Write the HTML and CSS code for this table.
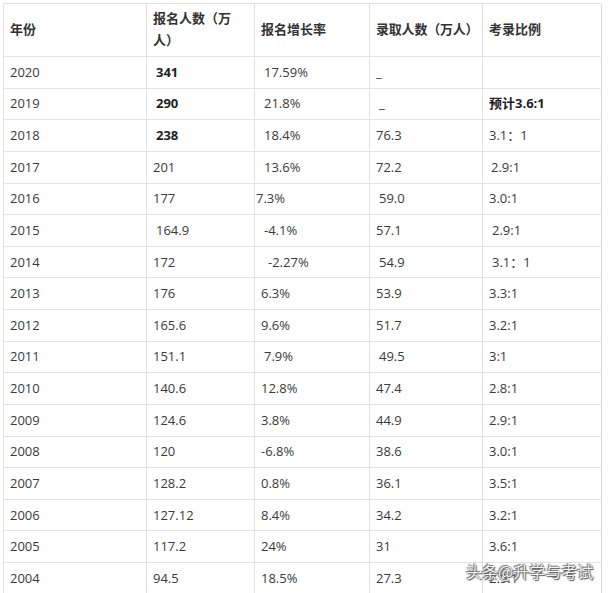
FILE: index.html
```html
<!DOCTYPE html>
<html lang="zh-CN">
<head>
<meta charset="utf-8">
<title>历年考研报名人数</title>
<link rel="stylesheet" href="styles.css">
</head>
<body>
<div class="page">
  <div class="table">
    <div class="cell head">年份</div>
    <div class="cell head">报名人数（万人）</div>
    <div class="cell head">报名增长率</div>
    <div class="cell head one-line">录取人数（万人）</div>
    <div class="cell head">考录比例</div>

    <div class="cell">2020</div>
    <div class="cell b ind">341</div>
    <div class="cell ind">17.59%</div>
    <div class="cell low">_</div>
    <div class="cell"></div>

    <div class="cell">2019</div>
    <div class="cell b ind">290</div>
    <div class="cell ind">21.8%</div>
    <div class="cell low ind">_</div>
    <div class="cell b cn">预计3.6:1</div>

    <div class="cell">2018</div>
    <div class="cell b ind">238</div>
    <div class="cell ind">18.4%</div>
    <div class="cell">76.3</div>
    <div class="cell">3.1：1</div>

    <div class="cell">2017</div>
    <div class="cell">201</div>
    <div class="cell ind">13.6%</div>
    <div class="cell">72.2</div>
    <div class="cell ind-s">2.9:1</div>

    <div class="cell">2016</div>
    <div class="cell">177</div>
    <div class="cell tight">7.3%</div>
    <div class="cell ind">59.0</div>
    <div class="cell">3.0:1</div>

    <div class="cell">2015</div>
    <div class="cell ind">164.9</div>
    <div class="cell ind">-4.1%</div>
    <div class="cell">57.1</div>
    <div class="cell ind">2.9:1</div>

    <div class="cell">2014</div>
    <div class="cell">172</div>
    <div class="cell wide">-2.27%</div>
    <div class="cell ind">54.9</div>
    <div class="cell ind">3.1：1</div>

    <div class="cell">2013</div>
    <div class="cell">176</div>
    <div class="cell">6.3%</div>
    <div class="cell">53.9</div>
    <div class="cell">3.3:1</div>

    <div class="cell">2012</div>
    <div class="cell">165.6</div>
    <div class="cell">9.6%</div>
    <div class="cell">51.7</div>
    <div class="cell">3.2:1</div>

    <div class="cell">2011</div>
    <div class="cell">151.1</div>
    <div class="cell ind">7.9%</div>
    <div class="cell ind">49.5</div>
    <div class="cell">3:1</div>

    <div class="cell">2010</div>
    <div class="cell">140.6</div>
    <div class="cell">12.8%</div>
    <div class="cell">47.4</div>
    <div class="cell">2.8:1</div>

    <div class="cell">2009</div>
    <div class="cell">124.6</div>
    <div class="cell">3.8%</div>
    <div class="cell">44.9</div>
    <div class="cell">2.9:1</div>

    <div class="cell">2008</div>
    <div class="cell">120</div>
    <div class="cell">-6.8%</div>
    <div class="cell">38.6</div>
    <div class="cell">3.0:1</div>

    <div class="cell">2007</div>
    <div class="cell">128.2</div>
    <div class="cell">0.8%</div>
    <div class="cell">36.1</div>
    <div class="cell">3.5:1</div>

    <div class="cell">2006</div>
    <div class="cell">127.12</div>
    <div class="cell">8.4%</div>
    <div class="cell">34.2</div>
    <div class="cell">3.2:1</div>

    <div class="cell">2005</div>
    <div class="cell">117.2</div>
    <div class="cell">24%</div>
    <div class="cell">31</div>
    <div class="cell">3.6:1</div>

    <div class="cell">2004</div>
    <div class="cell">94.5</div>
    <div class="cell">18.5%</div>
    <div class="cell">27.3</div>
    <div class="cell">2.9:1</div>
  </div>
  <div class="watermark">头条@升学与考试</div>
</div>
</body>
</html>
```

FILE: styles.css
```css
html, body {
  margin: 0;
  padding: 0;
  background: #ffffff;
}

body {
  width: 608px;
  height: 593px;
  overflow: hidden;
  font-family: "Open Sans", "Noto Sans CJK SC", sans-serif;
  font-size: 13px;
  color: #3a3a3a;
}

.page {
  position: relative;
  width: 608px;
  height: 593px;
  padding: 3px 0 0 3px;
  box-sizing: border-box;
}

.table {
  display: grid;
  grid-template-columns: 143px 108px 115px 113px 119px;
  grid-template-rows: 53px;
  grid-auto-rows: 31.625px;
  border-top: 1px solid #dedede;
  border-left: 1px solid #e2e2e2;
  width: 598px;
  box-sizing: border-box;
}

.cell {
  display: flex;
  align-items: center;
  padding: 0 5px 1px 6px;
  border-right: 1px solid #e0e0e0;
  border-bottom: 1px solid #e3e3e3;
  box-sizing: border-box;
  line-height: 18px;
  white-space: nowrap;
  overflow: hidden;
}

.cell:nth-child(5n) {
  border-right-color: #d6d6d6;
}

.head {
  font-family: "Noto Sans CJK SC", sans-serif;
  font-weight: 700;
  font-size: 13px;
  line-height: 22px;
  color: #333333;
  white-space: normal;
  padding-bottom: 2px;
  padding-right: 6px;
}

.one-line {
  white-space: nowrap;
  overflow: visible;
  padding-right: 0;
  letter-spacing: -0.2px;
}

.b {
  font-weight: 700;
  color: #222222;
}

.cn {
  font-family: "Open Sans", "Noto Sans CJK SC", sans-serif;
}

.ind {
  padding-left: 9px;
}

.ind-s {
  padding-left: 8px;
}

.tight {
  padding-left: 1px;
}

.wide {
  padding-left: 13px;
}

.low {
  align-items: flex-end;
  padding-bottom: 7px;
}

.watermark {
  position: absolute;
  left: 466px;
  top: 561px;
  font-family: "Noto Sans CJK SC", sans-serif;
  font-size: 16px;
  line-height: 20px;
  color: #f4f4f4;
  text-shadow: 0 0 1px #444, 1px 1px 1px #555, -1px -1px 1px #777;
}
```
